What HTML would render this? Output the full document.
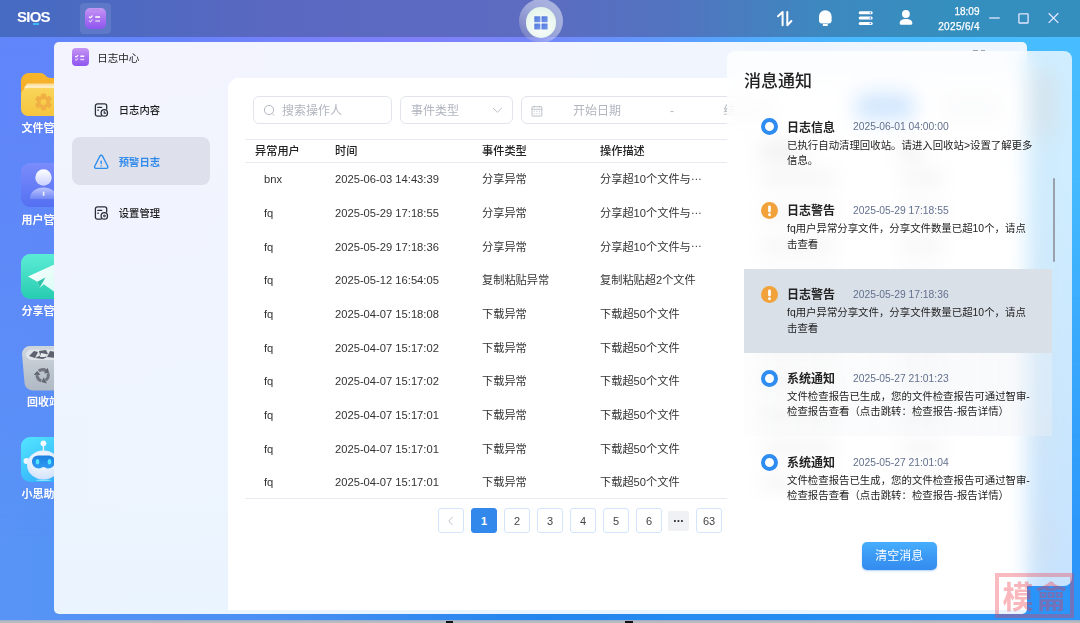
<!DOCTYPE html>
<html lang="zh-CN">
<head>
<meta charset="utf-8">
<title>日志中心</title>
<style>
*{box-sizing:border-box;margin:0;padding:0}
html,body{width:1080px;height:623px;overflow:hidden}
body{position:relative;font-family:"Liberation Sans","Noto Sans CJK SC",sans-serif;font-size:11px;color:#222;background:#4a9cf5}
.abs{position:absolute}
#desk{left:0;top:0;width:1080px;height:623px;background:linear-gradient(90deg,#6086fa 0%,#6484fa 14%,#7881fa 28%,#8080fa 39%,#7687fa 50%,#6496fc 59%,#5aa1fd 65%,#50b0fe 72%,#49bbff 80%,#48beff 100%)}
#desk2{left:0;top:0;width:1080px;height:623px;background:linear-gradient(90deg,#5894f6 0%,#4a8ff4 25%,#2386ee 50%,#268df3 75%,#2b95fa 100%);-webkit-mask-image:linear-gradient(180deg,transparent 0%,rgba(0,0,0,.08) 28%,rgba(0,0,0,.5) 55%,#000 88%);mask-image:linear-gradient(180deg,transparent 0%,rgba(0,0,0,.08) 28%,rgba(0,0,0,.5) 55%,#000 88%)}
#botstrip{left:0;top:620px;width:1080px;height:3px;background:linear-gradient(180deg,#8fa9d6 0,#b4b7bd 1px,#bcbec3 3px)}
/* top bar */
#topbar{left:0;top:0;width:1080px;height:37px;background:linear-gradient(90deg,#466bc2 0%,#4e69c1 12%,#5a68c1 25%,#5d6bc1 48%,#5273c0 62%,#3d88bf 76%,#358fbe 88%,#358fbe 100%)}
#logo{left:17px;top:7.6px;font-size:15px;font-weight:bold;color:#fff;letter-spacing:-.75px;line-height:17px;transform:translateZ(0)}
#logo i{position:absolute;left:16px;top:15.6px;width:6px;height:1.6px;background:#3db8f6}
#tbapp{left:80px;top:3px;width:31px;height:31px;border-radius:4px;background:rgba(255,255,255,.10)}
.pico{border-radius:5px;background:linear-gradient(180deg,#c596f3 0%,#aa72f1 50%,#8e56f0 100%)}
#center-glow{left:518.5px;top:-1.5px;width:44px;height:44px;border-radius:50%;background:linear-gradient(40deg,rgba(175,170,200,.30) 10%,rgba(255,255,255,.42) 55%,rgba(255,255,255,.50) 100%)}
#center-btn{left:525.8px;top:7.3px;width:30.5px;height:30.5px;border-radius:50%;background:radial-gradient(circle at 50% 60%,#ffffff 0%,#e8f6ee 60%,#ddf3e6 100%)}
.tbtxt{color:#fff;font-size:10px;line-height:13px;text-align:right;width:59.5px;-webkit-text-stroke:.25px #fff;transform:translateZ(0)}
/* window */
#win{left:54px;top:42px;width:973px;height:572px;border-radius:5px;background:linear-gradient(180deg,rgba(234,244,254,0) 0%,rgba(234,244,254,.35) 50%,rgba(232,244,254,.8) 100%),linear-gradient(90deg,#f3f4fe 0%,#f2f5fe 50%,#edf6fe 100%);overflow:hidden;transform:translateZ(0)}
#content{left:174px;top:36px;width:799px;height:532px;background:#fff;border-radius:11px 0 0 0}
.side{font-size:10.3px;font-weight:500;color:#1f1f1f;line-height:14px}
#active{left:18px;top:95px;width:138px;height:48px;border-radius:8px;background:#dee1eb}
.inp{border:1px solid #e1e4ee;border-radius:6px;height:28px;background:#fff;top:54px}
.ph{color:#b1b5bf;font-size:12px;line-height:16px;top:5.5px}
.hline{height:1px;background:#e9ebf3;left:191px;width:790px}
.th{font-weight:500;font-size:11.2px;color:#222;line-height:14px;top:102px}
.td{font-size:11.2px;color:#333;line-height:14px;white-space:nowrap}
.el{position:relative;top:-3.3px}
.bar{height:8px;border-radius:2px;background:rgba(70,70,70,.42)}
.pg{top:466px;width:26px;height:25px;border:1px solid #d3e4fb;border-radius:3px;background:#fff;text-align:center;font-size:11px;line-height:25px;color:#444}
/* panel */
#panel{left:727px;top:51px;width:345px;height:535px;border-radius:8px;background:rgba(255,255,255,.74);-webkit-backdrop-filter:blur(10px);backdrop-filter:blur(10px);overflow:hidden}
.nt{font-size:12px;font-weight:bold;color:#222;line-height:15px;left:60px}
.ntime{font-size:10.3px;color:#62708e;line-height:15px;left:126px}
.nbody{font-size:10.42px;color:#222;line-height:15.3px;left:60px;width:250px}
.nico{left:34.2px;width:17px;height:17px;border-radius:50%}
.nico.b{border:4.3px solid #2f8cf0;background:#fff}
.nico.o{background:#f2a23a}
</style>
</head>
<body>
<div id="desk" class="abs"></div>
<div id="desk2" class="abs"></div>
<div id="botstrip" class="abs"></div>
<div class="abs" style="left:446px;top:620.5px;width:7px;height:3px;background:#111"></div><div class="abs" style="left:625px;top:620.5px;width:7.5px;height:3px;background:#111"></div>

<!-- DESKTOP ICONS -->
<svg class="abs" style="left:21px;top:72px" width="46" height="45" viewBox="0 0 46 45">
<defs><linearGradient id="fg1" x1="0" y1="0" x2="0" y2="1"><stop offset="0" stop-color="#f8b62c"/><stop offset="1" stop-color="#f3a520"/></linearGradient>
<linearGradient id="fg2" x1="0" y1="0" x2="0" y2="1"><stop offset="0" stop-color="#f9d55a"/><stop offset="1" stop-color="#f5c53e"/></linearGradient></defs>
<path d="M0 9a8 8 0 0 1 8-8h11c3 0 4 1 5.500 2.500S27 6 30 6h8a8 8 0 0 1 8 8v20H0z" fill="url(#fg1)"/>
<rect x="5" y="11.500" width="38" height="8" rx="2" fill="#fbe0a0"/>
<rect x="3.500" y="13.500" width="40" height="8" rx="2" fill="#fdecc0"/>
<path d="M0 23a7 7 0 0 1 7-7h32a7 7 0 0 1 7 7v14a7 7 0 0 1-7 7H7a7 7 0 0 1-7-7z" fill="url(#fg2)"/>
<g transform="translate(22.500 30)" fill="#f0b044"><circle r="6.300"/><g><rect x="-2.600" y="-8.600" width="5.200" height="17.200" rx="1.600"/><rect x="-2.600" y="-8.600" width="5.200" height="17.200" rx="1.600" transform="rotate(60)"/><rect x="-2.600" y="-8.600" width="5.200" height="17.200" rx="1.600" transform="rotate(120)"/></g><circle r="2.900" fill="#f7cd4a"/></g>
</svg>
<div style="position:absolute;color:#fff;font-weight:bold;font-size:11px;line-height:14px;white-space:nowrap;text-shadow:0 0 1px rgba(40,60,160,.25);transform:translateZ(0);left:21.500px;top:121px">文件管理</div>
<svg class="abs" style="left:21px;top:163px" width="46" height="45" viewBox="0 0 46 45">
<defs><linearGradient id="ug1" x1="0" y1="0" x2="0" y2="1"><stop offset="0" stop-color="#7b8cfb"/><stop offset="1" stop-color="#5470f2"/></linearGradient>
<linearGradient id="ug2" x1="0" y1="0" x2="0" y2="1"><stop offset="0" stop-color="#ffffff"/><stop offset="1" stop-color="#c9d0fd"/></linearGradient>
<linearGradient id="ug3" x1="0" y1="0" x2="0" y2="1"><stop offset="0" stop-color="#bcc5fd"/><stop offset="1" stop-color="#7388f6"/></linearGradient></defs>
<rect width="46" height="44" rx="9" fill="url(#ug1)"/>
<circle cx="22.500" cy="14.500" r="8.200" fill="url(#ug2)"/>
<path d="M9 36c0-7.500 6-11.500 13.500-11.500S36 28.500 36 36z" fill="url(#ug3)"/>
<rect x="21.700" y="28.500" width="1.800" height="4.500" rx=".9" fill="#e6e9ff"/>
</svg>
<div style="position:absolute;color:#fff;font-weight:bold;font-size:11px;line-height:14px;white-space:nowrap;text-shadow:0 0 1px rgba(40,60,160,.25);transform:translateZ(0);left:21.500px;top:212.500px">用户管理</div>
<svg class="abs" style="left:21px;top:254px" width="46" height="46" viewBox="0 0 46 46">
<defs><linearGradient id="sg1" x1="0" y1="0" x2="0" y2="1"><stop offset="0" stop-color="#5cecd6"/><stop offset="1" stop-color="#27ccb0"/></linearGradient>
<linearGradient id="sg2" x1="0" y1="0" x2="1" y2="1"><stop offset="0" stop-color="#ffffff"/><stop offset="1" stop-color="#d4fbf3"/></linearGradient></defs>
<rect width="46" height="45" rx="9" fill="url(#sg1)"/>
<path d="M7 22.500L41 7 35 39 22.800 30.300 18.500 34 16.300 27.800z" fill="url(#sg2)"/>
<path d="M16.300 27.800L24.500 23.500 18.500 34z" fill="#2cc4ab"/>
</svg>
<div style="position:absolute;color:#fff;font-weight:bold;font-size:11px;line-height:14px;white-space:nowrap;text-shadow:0 0 1px rgba(40,60,160,.25);transform:translateZ(0);left:21.500px;top:303.500px">分享管理</div>
<svg class="abs" style="left:21px;top:345px" width="46" height="46" viewBox="0 0 46 46">
<defs><linearGradient id="rg1" x1="0" y1="0" x2="0" y2="1"><stop offset="0" stop-color="#cfd6dd"/><stop offset="1" stop-color="#b0b9c4"/></linearGradient></defs>
<path d="M1 9a8 8 0 0 1 8-8h28a8 8 0 0 1 8 8l-2.500 29a8 8 0 0 1-8 7.500H11.500a8 8 0 0 1-8-7.500z" fill="url(#rg1)"/>
<path d="M5 9.500c0-3 3-5 7-5h22c4 0 7 2 7 5 0 3.500-3 5.500-7 5.500H12c-4 0-7-2-7-5.500z" fill="#dfe4e9"/>
<path d="M8 11l5-5 4 1-3 6zM18 6l7-1 2 4-8 1zM26 12l3-6 6 1v6zM14 13l6-3 6 2-4 2z" fill="#5d626e"/>
<path d="M20 8l5 1-1 3-5 0z" fill="#e9ecef"/>
<g transform="translate(21.700 30.300) rotate(-20)"><circle r="5.600" fill="none" stroke="#70757f" stroke-width="3.100" stroke-dasharray="7.600 4.130"/><g fill="#5f646f"><path id="rh" d="M1.100 9L.2 2.200-3.300 6z"/><path d="M1.100 9L.2 2.200-3.300 6z" transform="rotate(120)"/><path d="M1.100 9L.2 2.200-3.300 6z" transform="rotate(240)"/></g></g>
</svg>
<div style="position:absolute;color:#fff;font-weight:bold;font-size:11px;line-height:14px;white-space:nowrap;text-shadow:0 0 1px rgba(40,60,160,.25);transform:translateZ(0);left:27px;top:395px">回收站</div>
<svg class="abs" style="left:21px;top:437px" width="46" height="46" viewBox="0 0 46 46">
<defs><linearGradient id="bg1" x1="0" y1="0" x2=".6" y2="1"><stop offset="0" stop-color="#52e6ff"/><stop offset="1" stop-color="#35b0fb"/></linearGradient>
<radialGradient id="bg2" cx=".45" cy=".35" r=".7"><stop offset="0" stop-color="#ffffff"/><stop offset="1" stop-color="#cfe0fb"/></radialGradient>
<linearGradient id="bg3" x1="0" y1="0" x2="0" y2="1"><stop offset="0" stop-color="#1d7fe0"/><stop offset="1" stop-color="#2f9cf5"/></linearGradient></defs>
<rect width="46" height="45" rx="9" fill="url(#bg1)"/>
<rect x="21.700" y="8" width="1.400" height="6" fill="#eaf4ff"/>
<circle cx="22.400" cy="6.300" r="2.900" fill="#f4f9ff"/>
<circle cx="5.500" cy="24" r="3" fill="#f0f6ff"/><circle cx="39.500" cy="24" r="3" fill="#f0f6ff"/>
<ellipse cx="22.500" cy="28" rx="16.500" ry="14.500" fill="url(#bg2)"/>
<path d="M11 24.500c0-4 3-6 7-6h9c4 0 7 2 7 6s-3 7-7 7c-2 0-3-1.500-4.500-1.500S20 31.500 18 31.500c-4 0-7-3-7-7z" fill="url(#bg3)"/>
<ellipse cx="16.500" cy="24.800" rx="1.900" ry="2.700" fill="#4fe6ff"/><ellipse cx="28.500" cy="24.800" rx="1.900" ry="2.700" fill="#4fe6ff"/>
<ellipse cx="22.500" cy="43.300" rx="8" ry=".8" fill="#8fe0ff"/>
</svg>
<div style="position:absolute;color:#fff;font-weight:bold;font-size:11px;line-height:14px;white-space:nowrap;text-shadow:0 0 1px rgba(40,60,160,.25);transform:translateZ(0);left:21.500px;top:487px">小思助手</div>

<!-- TOP BAR -->
<div id="topbar" class="abs">
  <div id="logo" class="abs">SIOS<i></i></div>
  <div id="tbapp" class="abs"></div>
  <div class="abs pico" style="left:85px;top:8px;width:21px;height:21px"></div>
  <div id="center-glow" class="abs"></div>
  <div id="center-btn" class="abs"></div>
  <svg class="abs" style="left:85px;top:8px" width="21" height="21" viewBox="0 0 21 21" fill="none" stroke="#fff" stroke-linecap="round" stroke-linejoin="round"><path d="M7.200 1.600h6.600" stroke="#b68af0" stroke-width="1"/><path d="M4.300 9l1 .9 1.900-1.900" stroke-width="1.200" opacity=".95"/><path d="M10.300 9h4.800" stroke-width="1.700" stroke-linecap="butt" opacity=".9"/><path d="M4.300 13l1 .9 1.900-1.900" stroke-width="1.200" opacity=".6"/><path d="M10.300 13h4.800" stroke-width="1.700" stroke-linecap="butt" opacity=".55"/></svg>
  <svg class="abs" style="left:534px;top:16.400px" width="14" height="14" viewBox="0 0 14 14"><defs><linearGradient id="gg" x1="0" y1="0" x2="1" y2="1"><stop offset="0" stop-color="#5179dd"/><stop offset="1" stop-color="#7398ea"/></linearGradient></defs><rect x=".3" y=".2" width="6.100" height="6.100" rx=".6" fill="url(#gg)"/><rect x="7.500" y=".2" width="6.100" height="6.100" rx=".6" fill="url(#gg)"/><rect x=".3" y="7.400" width="6.100" height="6.100" rx=".6" fill="url(#gg)"/><rect x="7.500" y="7.400" width="6.100" height="6.100" rx=".6" fill="url(#gg)"/></svg>
  <svg class="abs" style="left:774px;top:8px" width="22" height="22" viewBox="0 0 22 22" fill="none" stroke="#fff" stroke-width="2" stroke-linecap="round" stroke-linejoin="round"><path d="M4 8.300L8.600 4v13.300"/><path d="M13.300 4v13.300L17.400 13"/></svg>
  <svg class="abs" style="left:815px;top:8px" width="20" height="20" viewBox="0 0 20 20" fill="#fff"><path d="M4 8.500a6.300 6.300 0 0 1 12.600 0v4.200c0 1.600-1.100 2.700-2.700 2.700H6.700c-1.600 0-2.700-1.100-2.700-2.700z"/><rect x="7.800" y="16.100" width="5" height="1.900" rx=".6"/></svg>
  <svg class="abs" style="left:856px;top:8px" width="20" height="20" viewBox="0 0 20 20"><g fill="#fff"><rect x="2.700" y="3.200" width="14" height="3" rx="1.500"/><rect x="2.700" y="8.600" width="14" height="3" rx="1.500"/><rect x="2.700" y="13.900" width="14" height="3" rx="1.500"/></g><g fill="#4f86d8"><circle cx="14.300" cy="4.700" r=".8"/><circle cx="14.300" cy="10.100" r=".8"/><circle cx="14.300" cy="15.400" r=".8"/></g></svg>
  <svg class="abs" style="left:896px;top:8px" width="20" height="20" viewBox="0 0 20 20" fill="#fff"><circle cx="9.900" cy="6" r="3.900"/><path d="M3.700 15.200c0-2.800 2.800-4.100 6.200-4.100s6.400 1.300 6.400 4.100c0 1-.8 1.500-1.800 1.500H5.500c-1 0-1.800-.5-1.800-1.500z"/></svg>
  <svg class="abs" style="left:985px;top:8px" width="80" height="20" viewBox="0 0 80 20" fill="none" stroke="#e4e6ff" stroke-width="1.300"><path d="M4.200 10h10.500"/><rect x="33.900" y="5.800" width="9.200" height="9.200" rx=".4"/><path d="M63.700 5.300l9.600 9.600M73.300 5.300l-9.600 9.600"/></svg>
  <div class="abs tbtxt" style="left:920px;top:4.8px">18:09</div>
  <div class="abs tbtxt" style="left:920px;top:20.3px;letter-spacing:.33px;left:920.3px">2025/6/4</div>
</div>

<!-- WINDOW -->
<div id="win" class="abs">
  <div class="abs pico" style="left:18px;top:6.2px;width:17px;height:17.6px;border-radius:4px"></div>
  <div class="abs" style="left:43.2px;top:9px;font-size:10.5px;line-height:14px;color:#222">日志中心</div>
  <svg class="abs" style="left:18px;top:6.500px" width="17" height="17" viewBox="0 0 21 21" fill="none" stroke="#fff" stroke-linecap="round" stroke-linejoin="round"><path d="M4.300 9l1 .9 1.900-1.900" stroke-width="1.300"/><path d="M10.300 9h4.800" stroke-width="1.900" stroke-linecap="butt"/><path d="M4.300 13l1 .9 1.900-1.900" stroke-width="1.300" opacity=".7"/><path d="M10.300 13h4.800" stroke-width="1.900" stroke-linecap="butt" opacity=".7"/></svg>
  <div id="active" class="abs"></div>
  <div class="abs side" style="left:64.8px;top:62px">日志内容</div>
  <div class="abs side" style="left:64.8px;top:113.8px;color:#2f8aeb;font-weight:bold">预警日志</div>
  <div class="abs side" style="left:64.8px;top:165.4px">设置管理</div>
  <div class="abs" style="left:919px;top:8px;width:4.5px;height:1px;background:#9aa3ad"></div><div class="abs" style="left:926.5px;top:8px;width:4.5px;height:1px;background:#9aa3ad"></div>
  <svg class="abs" style="left:39px;top:60px" width="17" height="17" viewBox="0 0 17 17" fill="none" stroke="#2b2e39" stroke-width="1.300" stroke-linecap="round"><path d="M8 14.200H4.400a2 2 0 0 1-2-2V3.900a2 2 0 0 1 2-2h7.300a2 2 0 0 1 2 2V7"/><path d="M4.800 5.400h3.900M4.800 8.200h.6"/><circle cx="11.300" cy="10.900" r="3.200"/><path d="M11.200 9.300v1.800h1.600" stroke-width="1.100"/></svg>
  <svg class="abs" style="left:38px;top:111px" width="18" height="18" viewBox="0 0 18 18" fill="none" stroke="#2f8deb" stroke-width="1.350" stroke-linecap="round" stroke-linejoin="round"><path d="M8 2.900a1.400 1.400 0 0 1 2.400 0l5.300 10.300a1.400 1.400 0 0 1-1.200 2.100H3.900a1.400 1.400 0 0 1-1.200-2.100z"/><path d="M9.200 8.200v2.300" stroke-width="1.400"/><path d="M9.200 13v.1" stroke-width="1.500"/></svg>
  <svg class="abs" style="left:39px;top:163px" width="17" height="17" viewBox="0 0 17 17" fill="none" stroke="#2b2e39" stroke-width="1.300" stroke-linecap="round"><path d="M8 14.200H4.400a2 2 0 0 1-2-2V3.900a2 2 0 0 1 2-2h7.300a2 2 0 0 1 2 2V7"/><path d="M4.800 5.400h3.900M4.800 8.200h.6"/><circle cx="11.300" cy="10.900" r="3.200"/><circle cx="11.300" cy="10.900" r=".9" stroke-width="1"/></svg>
  <div id="content" class="abs"></div>
  <div class="abs inp" style="left:199px;top:54px;width:139px"><svg class="abs" style="left:9px;top:7px" width="13" height="13" viewBox="0 0 13 13" fill="none" stroke="#b4b8c2" stroke-width="1"><circle cx="6" cy="6" r="4.6"/><path d="M9.4 9.6l1.8 1.8"/></svg><div class="abs ph" style="left:28px">搜索操作人</div></div>
  <div class="abs inp" style="left:346px;top:54px;width:113px"><div class="abs ph" style="left:10px">事件类型</div><svg class="abs" style="left:91px;top:10px" width="11" height="7" viewBox="0 0 11 7" fill="none" stroke="#bcc0c9" stroke-width="1"><path d="M1 1l4.400 4.300 4.400-4.300"/></svg></div>
  <div class="abs inp" style="left:467px;top:54px;width:360px"><svg class="abs" style="left:9px;top:7.5px" width="12" height="12" viewBox="0 0 12 12" fill="none" stroke="#bcc0c9" stroke-width="1"><rect x="1" y="1.700" width="9.800" height="9.300" rx=".4"/><path d="M1 4.300h9.800M3.300 .8v1.600M8.500 .8v1.600"/><path d="M2.900 6.400h1M5.400 6.400h1M7.900 6.400h1M2.900 8.600h1M5.400 8.600h1M7.900 8.600h1" stroke-width=".9"/></svg><div class="abs ph" style="left:51px">开始日期</div><div class="abs ph" style="left:148px">-</div><div class="abs ph" style="left:201.5px">结束日期</div></div>
  <div class="abs" style="left:802px;top:51px;width:58px;height:27px;border-radius:4px;background:#4a9df7"></div>
  <div class="abs" style="left:886px;top:51px;width:62px;height:28px;border-radius:4px;background:#eceef2"></div>
  <div class="abs hline" style="top:97px"></div>
  <div class="abs hline" style="top:120px"></div>
  <div class="abs th" style="left:201px;top:102px">异常用户</div>
  <div class="abs th" style="left:281px;top:102px">时间</div>
  <div class="abs th" style="left:428px;top:102px">事件类型</div>
  <div class="abs th" style="left:546px;top:102px">操作描述</div>
  <div class="abs td" style="left:210px;top:130.2px">bnx</div>
  <div class="abs td" style="left:281px;top:130.2px">2025-06-03 14:43:39</div>
  <div class="abs td" style="left:428px;top:130.2px">分享异常</div>
  <div class="abs td" style="left:546px;top:130.2px">分享超10个文件与<span class="el">…</span></div>
  <div class="abs bar" style="left:706px;top:133.0px;width:76px"></div>
  <div class="abs bar" style="left:846px;top:133.0px;width:44px"></div>
  <div class="abs td" style="left:210px;top:163.9px">fq</div>
  <div class="abs td" style="left:281px;top:163.9px">2025-05-29 17:18:55</div>
  <div class="abs td" style="left:428px;top:163.9px">分享异常</div>
  <div class="abs td" style="left:546px;top:163.9px">分享超10个文件与<span class="el">…</span></div>
  <div class="abs bar" style="left:706px;top:166.7px;width:76px"></div>
  <div class="abs bar" style="left:846px;top:166.7px;width:44px"></div>
  <div class="abs td" style="left:210px;top:197.5px">fq</div>
  <div class="abs td" style="left:281px;top:197.5px">2025-05-29 17:18:36</div>
  <div class="abs td" style="left:428px;top:197.5px">分享异常</div>
  <div class="abs td" style="left:546px;top:197.5px">分享超10个文件与<span class="el">…</span></div>
  <div class="abs bar" style="left:706px;top:200.3px;width:76px"></div>
  <div class="abs bar" style="left:846px;top:200.3px;width:44px"></div>
  <div class="abs td" style="left:210px;top:231.2px">fq</div>
  <div class="abs td" style="left:281px;top:231.2px">2025-05-12 16:54:05</div>
  <div class="abs td" style="left:428px;top:231.2px">复制粘贴异常</div>
  <div class="abs td" style="left:546px;top:231.2px">复制粘贴超2个文件</div>
  <div class="abs bar" style="left:706px;top:234.0px;width:76px"></div>
  <div class="abs bar" style="left:846px;top:234.0px;width:44px"></div>
  <div class="abs td" style="left:210px;top:264.9px">fq</div>
  <div class="abs td" style="left:281px;top:264.9px">2025-04-07 15:18:08</div>
  <div class="abs td" style="left:428px;top:264.9px">下载异常</div>
  <div class="abs td" style="left:546px;top:264.9px">下载超50个文件</div>
  <div class="abs bar" style="left:706px;top:267.7px;width:76px"></div>
  <div class="abs bar" style="left:846px;top:267.7px;width:44px"></div>
  <div class="abs td" style="left:210px;top:298.6px">fq</div>
  <div class="abs td" style="left:281px;top:298.6px">2025-04-07 15:17:02</div>
  <div class="abs td" style="left:428px;top:298.6px">下载异常</div>
  <div class="abs td" style="left:546px;top:298.6px">下载超50个文件</div>
  <div class="abs bar" style="left:706px;top:301.4px;width:76px"></div>
  <div class="abs bar" style="left:846px;top:301.4px;width:44px"></div>
  <div class="abs td" style="left:210px;top:332.2px">fq</div>
  <div class="abs td" style="left:281px;top:332.2px">2025-04-07 15:17:02</div>
  <div class="abs td" style="left:428px;top:332.2px">下载异常</div>
  <div class="abs td" style="left:546px;top:332.2px">下载超50个文件</div>
  <div class="abs bar" style="left:706px;top:335.0px;width:76px"></div>
  <div class="abs bar" style="left:846px;top:335.0px;width:44px"></div>
  <div class="abs td" style="left:210px;top:365.9px">fq</div>
  <div class="abs td" style="left:281px;top:365.9px">2025-04-07 15:17:01</div>
  <div class="abs td" style="left:428px;top:365.9px">下载异常</div>
  <div class="abs td" style="left:546px;top:365.9px">下载超50个文件</div>
  <div class="abs bar" style="left:706px;top:368.7px;width:76px"></div>
  <div class="abs bar" style="left:846px;top:368.7px;width:44px"></div>
  <div class="abs td" style="left:210px;top:399.6px">fq</div>
  <div class="abs td" style="left:281px;top:399.6px">2025-04-07 15:17:01</div>
  <div class="abs td" style="left:428px;top:399.6px">下载异常</div>
  <div class="abs td" style="left:546px;top:399.6px">下载超50个文件</div>
  <div class="abs bar" style="left:706px;top:402.4px;width:76px"></div>
  <div class="abs bar" style="left:846px;top:402.4px;width:44px"></div>
  <div class="abs td" style="left:210px;top:433.2px">fq</div>
  <div class="abs td" style="left:281px;top:433.2px">2025-04-07 15:17:01</div>
  <div class="abs td" style="left:428px;top:433.2px">下载异常</div>
  <div class="abs td" style="left:546px;top:433.2px">下载超50个文件</div>
  <div class="abs bar" style="left:706px;top:436.0px;width:76px"></div>
  <div class="abs bar" style="left:846px;top:436.0px;width:44px"></div>
  <div class="abs bar" style="left:706px;top:105px;width:44px;background:rgba(40,40,40,.6)"></div>
  <div class="abs bar" style="left:846px;top:105px;width:22px;background:rgba(40,40,40,.6)"></div>
  <div class="abs hline" style="top:456px"></div>
  <div class="abs pg" style="left:384px;top:466px"><svg class="abs" style="left:8px;top:7px" width="8" height="10" viewBox="0 0 8 10" fill="none" stroke="#c3c7d0" stroke-width="1"><path d="M5.5 1L1.8 5l3.7 4"/></svg></div>
  <div class="abs pg" style="left:417px;top:466px;background:#3388ec;border-color:#3388ec;color:#fff;font-weight:bold">1</div>
  <div class="abs pg" style="left:450px;top:466px">2</div>
  <div class="abs pg" style="left:483px;top:466px">3</div>
  <div class="abs pg" style="left:516px;top:466px">4</div>
  <div class="abs pg" style="left:549px;top:466px">5</div>
  <div class="abs pg" style="left:582px;top:466px">6</div>
  <div class="abs" style="left:614px;top:469px;width:21px;height:20px;border-radius:2px;background:#f0f1f5;text-align:center;font-size:12px;line-height:21px;color:#333;font-weight:bold;letter-spacing:-.5px">···</div>
  <div class="abs pg" style="left:642px;top:466px">63</div>
</div>

<!-- faint shapes behind the frosted panel -->
<div class="abs" style="left:1029px;top:68px;width:28px;height:72px;border-radius:14px;background:rgba(110,118,128,.5)"></div>
<div class="abs" style="left:1036px;top:140px;width:14px;height:436px;border-radius:6px;background:rgba(110,118,128,.20)"></div>
<div class="abs" style="left:1035px;top:415px;width:16px;height:34px;border-radius:8px;background:rgba(110,118,128,.22)"></div>
<div class="abs" style="left:1035px;top:520px;width:16px;height:40px;border-radius:8px;background:rgba(110,118,128,.25)"></div>
<!-- PANEL -->
<div id="panel" class="abs">
  <div class="abs" style="left:17px;top:19px;font-size:17px;font-weight:500;line-height:24px;color:#222">消息通知</div>
  <div class="abs" style="left:17px;top:218px;width:308px;height:83.5px;background:#dae0e8"></div>
  <div class="abs" style="left:17px;top:301.5px;width:308px;height:83px;background:linear-gradient(90deg,rgba(240,242,246,.15),rgba(238,240,244,.4))"></div>
  <div class="abs nico b" style="top:67.2px"></div>
  <div class="abs nt" style="top:69.6px">日志信息</div>
  <div class="abs ntime" style="top:68.3px">2025-06-01 04:00:00</div>
  <div class="abs nbody" style="top:86.6px">已执行自动清理回收站。请进入回收站&gt;设置了解更多<br>信息。</div>
  <div class="abs nico o" style="top:151.0px"><svg class="abs" style="left:0;top:0" width="17" height="17" viewBox="0 0 16 16"><rect x="6.7" y="3.2" width="2.6" height="6.6" rx="1.3" fill="#fff"/><circle cx="8" cy="12" r="1.4" fill="#fff"/></svg></div>
  <div class="abs nt" style="top:153.4px">日志警告</div>
  <div class="abs ntime" style="top:152.1px">2025-05-29 17:18:55</div>
  <div class="abs nbody" style="top:170.4px">fq用户异常分享文件，分享文件数量已超10个，请点<br>击查看</div>
  <div class="abs nico o" style="top:234.9px"><svg class="abs" style="left:0;top:0" width="17" height="17" viewBox="0 0 16 16"><rect x="6.7" y="3.2" width="2.6" height="6.6" rx="1.3" fill="#fff"/><circle cx="8" cy="12" r="1.4" fill="#fff"/></svg></div>
  <div class="abs nt" style="top:237.3px">日志警告</div>
  <div class="abs ntime" style="top:236.0px">2025-05-29 17:18:36</div>
  <div class="abs nbody" style="top:254.3px">fq用户异常分享文件，分享文件数量已超10个，请点<br>击查看</div>
  <div class="abs nico b" style="top:318.7px"></div>
  <div class="abs nt" style="top:321.1px">系统通知</div>
  <div class="abs ntime" style="top:319.8px">2025-05-27 21:01:23</div>
  <div class="abs nbody" style="top:338.1px">文件检查报告已生成，您的文件检查报告可通过智审-<br>检查报告查看（点击跳转：检查报告-报告详情）</div>
  <div class="abs nico b" style="top:402.5px"></div>
  <div class="abs nt" style="top:404.9px">系统通知</div>
  <div class="abs ntime" style="top:403.6px">2025-05-27 21:01:04</div>
  <div class="abs nbody" style="top:421.9px">文件检查报告已生成，您的文件检查报告可通过智审-<br>检查报告查看（点击跳转：检查报告-报告详情）</div>
  <div class="abs" style="left:325.5px;top:127px;width:2.8px;height:83.5px;border-radius:2px;background:#99a2ac"></div>
  <div class="abs" style="left:135px;top:491px;width:74.5px;height:27.7px;border-radius:5px;background:linear-gradient(180deg,#47aefd 0%,#3a98f4 55%,#348cee 100%);color:#fff;font-size:12px;line-height:28.8px;text-align:center;box-shadow:0 1px 2px rgba(40,120,230,.35)">清空消息</div>
</div>
<div class="abs" style="left:995px;top:573px;width:79px;height:45px;border:4px solid rgba(241,55,69,.34);overflow:hidden">
  <div class="abs" style="left:3.5px;top:4.5px;width:68px;height:31px;font-family:'Liberation Sans','Noto Sans CJK SC',sans-serif;font-weight:700;font-size:31px;line-height:31px;letter-spacing:2px;color:rgba(241,55,69,.36);white-space:nowrap">模龠</div>
</div>
</body>
</html>
